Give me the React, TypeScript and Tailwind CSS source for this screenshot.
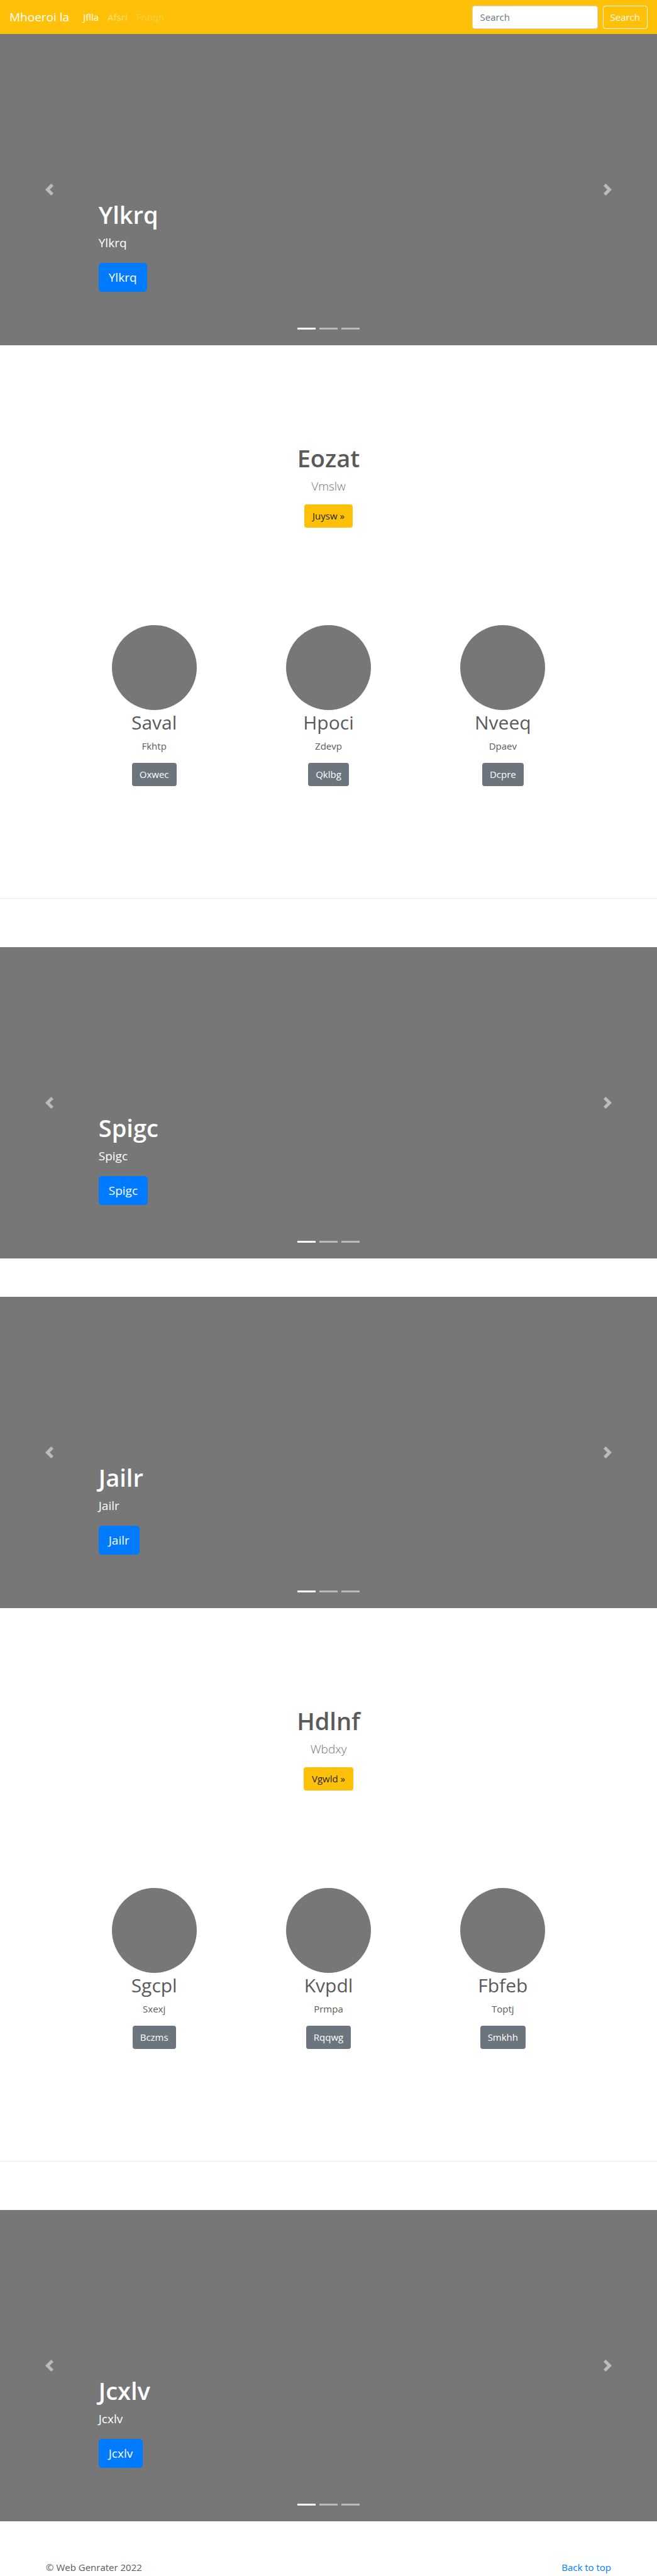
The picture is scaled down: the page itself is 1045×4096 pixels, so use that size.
import React from "react";

type Feature = { title: string; text: string; action: string };

function Arrow({ direction }: { direction: "prev" | "next" }) {
  const path =
    direction === "prev"
      ? "M5.25 0l-4 4 4 4 1.5-1.5-2.5-2.5 2.5-2.5-1.5-1.5z"
      : "M2.75 0l-1.5 1.5 2.5 2.5-2.5 2.5 1.5 1.5 4-4-4-4z";
  return (
    <svg viewBox="0 0 8 8" className="size-[19px]" fill="#fff" aria-hidden="true">
      <path d={path} />
    </svg>
  );
}

function Carousel({ label }: { label: string }) {
  return (
    <section className="relative flex h-[495px] flex-col justify-end bg-[#777] px-[15%] pb-[85px] text-white">
      <h1 className="text-[38px] leading-[46px] font-semibold">{label}</h1>
      <p className="mt-2 text-[19px] leading-7">{label}</p>
      <a
        href="#"
        className="mt-[18px] flex h-[46px] items-center self-start rounded-[5px] bg-[#007bff] px-4 text-[19px] leading-7"
      >
        {label}
      </a>
      <button
        type="button"
        aria-label="Previous"
        className="absolute inset-y-0 left-0 flex w-[15%] items-center justify-center opacity-50"
      >
        <Arrow direction="prev" />
      </button>
      <button
        type="button"
        aria-label="Next"
        className="absolute inset-y-0 right-0 flex w-[15%] items-center justify-center opacity-50"
      >
        <Arrow direction="next" />
      </button>
      <div className="absolute inset-x-0 bottom-[25px] flex justify-center gap-1.5">
        <button type="button" aria-label="Slide 1" className="h-[3px] w-[29px] bg-white" />
        <button type="button" aria-label="Slide 2" className="h-[3px] w-[29px] bg-white/50" />
        <button type="button" aria-label="Slide 3" className="h-[3px] w-[29px] bg-white/50" />
      </div>
    </section>
  );
}

function Marketing({
  title,
  lead,
  action,
  features,
}: {
  title: string;
  lead: string;
  action: string;
  features: Feature[];
}) {
  return (
    <section className="pt-[156px]">
      <div className="flex flex-col items-center text-center">
        <h1 className="text-[38px] leading-[46px] font-semibold">{title}</h1>
        <p className="mt-2 text-[19px] leading-7 font-light text-[#6c757d]">{lead}</p>
        <a
          href="#"
          className="mt-[15px] flex h-[37px] items-center rounded-sm bg-[#ffc107] px-[13px] text-[#212529]"
        >
          {action}
        </a>
      </div>
      <div className="mx-auto mt-[155px] grid max-w-[832px] grid-cols-3">
        {features.map((f) => (
          <div key={f.title} className="flex flex-col items-center text-center">
            <div className="size-[135px] rounded-full bg-[#777]" />
            <h2 className="mt-px text-[30px] leading-[38px]">{f.title}</h2>
            <p className="mt-[7px]">{f.text}</p>
            <a
              href="#"
              className="mt-[15px] flex h-[37px] items-center rounded-sm bg-[#6c757d] px-3 text-white"
            >
              {f.action}
            </a>
          </div>
        ))}
      </div>
      <hr className="mt-[178px] mb-[77px] border-t border-[#e5e5e5]" />
    </section>
  );
}

export default function App() {
  return (
    <div className="bg-white font-['Open_Sans',sans-serif] text-[15px] leading-[23px] text-[#5a5a5a]">
      <header className="flex h-[54px] items-center bg-[#ffc107] px-[15px] text-white">
        <a href="#" className="text-[19px]">
          Mhoeroi la
        </a>
        <nav className="ml-[22px] flex gap-[14px]">
          <a href="#">Jflla</a>
          <a href="#" className="text-white/50">
            Afsri
          </a>
          <a href="#" className="text-white/25">
            Fnbqh
          </a>
        </nav>
        <form className="ml-auto flex gap-2" onSubmit={(e) => e.preventDefault()}>
          <input
            type="search"
            aria-label="Search"
            placeholder="Search"
            className="h-[37px] w-[200px] rounded-sm border border-[#ced4da] bg-white px-3 text-[#495057] placeholder:text-[#6c757d]"
          />
          <button
            type="submit"
            className="h-[37px] rounded-sm border border-[#f8f9fa] px-[11px] text-[#f8f9fa]"
          >
            Search
          </button>
        </form>
      </header>
      <main>
        <Carousel label="Ylkrq" />
        <Marketing
          title="Eozat"
          lead="Vmslw"
          action="Juysw »"
          features={[
            { title: "Saval", text: "Fkhtp", action: "Oxwec" },
            { title: "Hpoci", text: "Zdevp", action: "Qklbg" },
            { title: "Nveeq", text: "Dpaev", action: "Dcpre" },
          ]}
        />
        <Carousel label="Spigc" />
        <div className="mt-[61px]">
          <Carousel label="Jailr" />
        </div>
        <Marketing
          title="Hdlnf"
          lead="Wbdxy"
          action="Vgwld »"
          features={[
            { title: "Sgcpl", text: "Sxexj", action: "Bczms" },
            { title: "Kvpdl", text: "Prmpa", action: "Rqqwg" },
            { title: "Fbfeb", text: "Toptj", action: "Smkhh" },
          ]}
        />
        <Carousel label="Jcxlv" />
      </main>
      <footer className="mx-auto flex max-w-[899px] justify-between pt-[62px]">
        <p>© Web Genrater 2022</p>
        <a href="#" className="text-[#007bff]">
          Back to top
        </a>
      </footer>
    </div>
  );
}
